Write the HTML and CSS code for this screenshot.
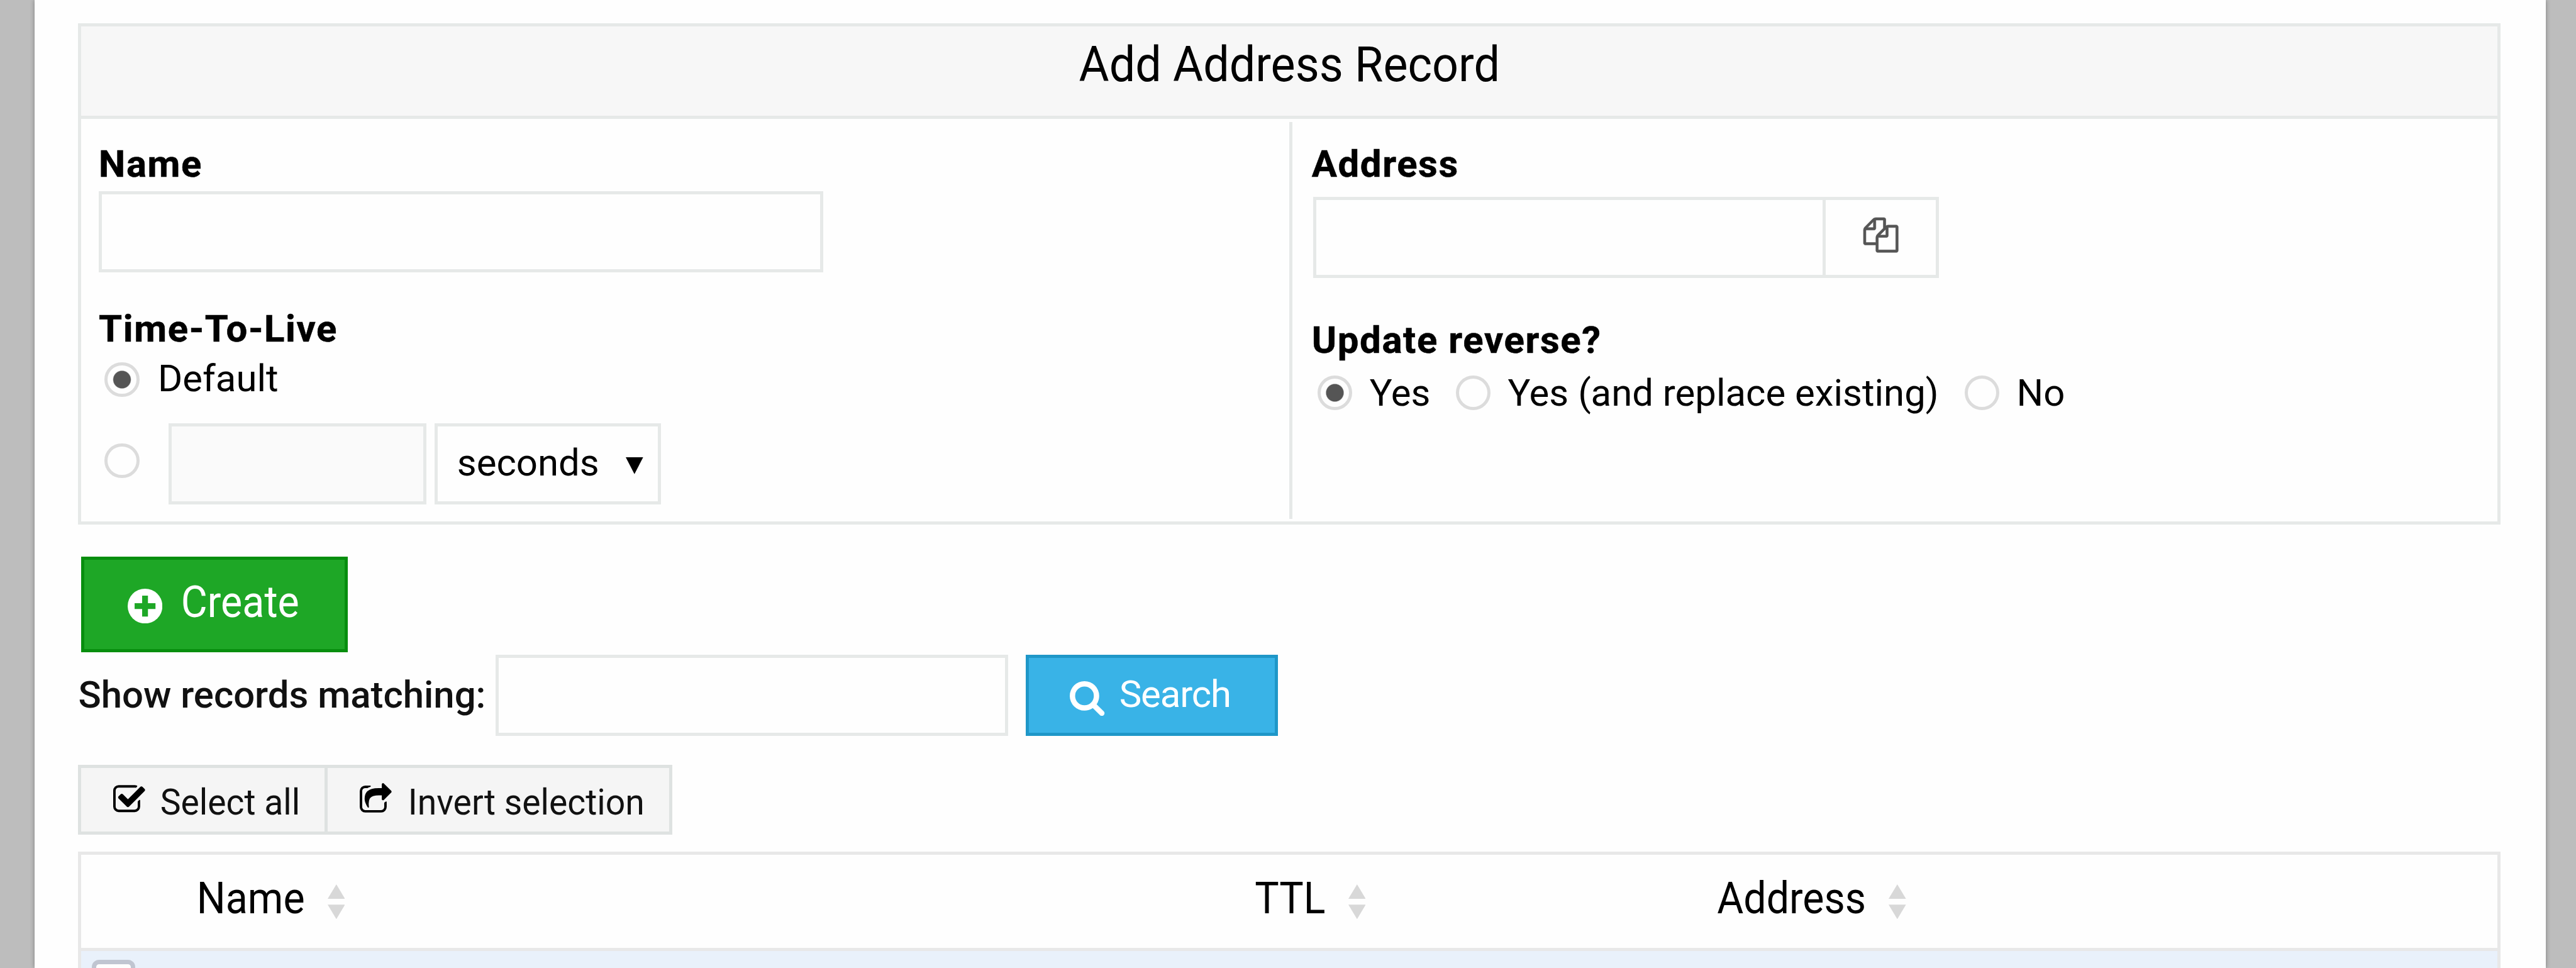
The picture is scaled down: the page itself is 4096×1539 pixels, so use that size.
FILE: index.html
```html
<!DOCTYPE html>
<html lang="en">
<head>
<meta charset="utf-8">
<title>Address Records</title>
<link rel="stylesheet" href="styles.css">
</head>
<body>
<main class="page">
  <section class="panel">
    <h1 class="panel-title"><span class="tall-title">Add Address Record</span></h1>
    <div class="panel-body">
      <div class="col col-left">
        <div class="label">Name</div>
        <div class="box name-input"></div>
        <div class="label ttl-label">Time-To-Live</div>
        <div class="line"><span class="radio on"></span><span class="radio-text r-default">Default</span></div>
        <div class="ttl-row">
          <span class="radio"></span>
          <div class="box ttl-input"></div>
          <div class="box select"><span>seconds</span><svg class="caret" viewBox="0 0 6 6"><path d="M0 0h6L3 5.8z"/></svg></div>
        </div>
      </div>
      <div class="col col-right">
        <div class="label">Address</div>
        <div class="addr-group">
          <div class="box addr-input"></div>
          <div class="box addr-button"><svg class="icon-files" viewBox="0 0 1792 1792"><path d="M1696 384q40 0 68 28t28 68v1216q0 40-28 68t-68 28h-960q-40 0-68-28t-28-68v-288h-544q-40 0-68-28t-28-68v-672q0-40 20-88t48-76l408-408q28-28 76-48t88-20h416q40 0 68 28t28 68v328q68-40 128-40h416zm-544 213l-299 299h299v-299zm-640-384l-299 299h299v-299zm196 647l316-316v-416h-384v416q0 40-28 68t-68 28h-416v640h512v-256q0-40 20-88t48-76zm956 804v-1152h-384v416q0 40-28 68t-68 28h-416v640h896z"/></svg></div>
        </div>
        <div class="label reverse-label">Update reverse?</div>
        <div class="line reverse-line">
          <span class="radio on"></span><span class="radio-text r-yes">Yes</span>
          <span class="radio"></span><span class="radio-text r-replace">Yes (and replace existing)</span>
          <span class="radio"></span><span class="radio-text">No</span>
        </div>
      </div>
    </div>
  </section>

  <div class="create"><svg class="icon-plus" viewBox="0 0 12 12"><circle cx="6" cy="6" r="6"/><path class="plus" d="M6 2.4v7.2M2.4 6h7.2"/></svg><span class="create-text">Create</span></div>

  <div class="search-row">
    <span class="search-label">Show records matching:</span>
    <div class="box search-input"></div>
    <div class="search"><svg class="icon-search" viewBox="0 0 1664 1664"><path d="M1152 704q0-185-131.500-316.500t-316.500-131.500-316.500 131.500-131.500 316.500 131.500 316.500 316.500 131.500 316.500-131.500 131.500-316.500zm512 832q0 52-38 90t-90 38q-54 0-90-38l-343-342q-179 124-399 124-143 0-273.500-55.500t-225-150-150-225-55.500-273.500 55.500-273.500 150-225 225-150 273.500-55.500 273.500 55.500 225 150 150 225 55.500 273.500q0 220-124 399l343 343q37 37 37 90z"/></svg><span class="search-text">Search</span></div>
  </div>

  <div class="links">
    <div class="link link-all"><svg class="icon-check" viewBox="0 0 1664 1280"><path d="M1408 606v318q0 119-84.500 203.500t-203.500 84.500h-832q-119 0-203.500-84.500t-84.500-203.500v-832q0-119 84.500-203.500t203.500-84.500h832q63 0 117 25 15 7 18 23 3 17-9 29l-49 49q-10 10-23 10-3 0-9-2-23-6-45-6h-832q-66 0-113 47t-47 113v832q0 66 47 113t113 47h832q66 0 113-47t47-113v-254q0-13 9-22l64-64q10-10 23-10 6 0 12 3 20 8 20 29zm231-489l-814 814q-24 24-57 24t-57-24l-430-430q-24-24-24-57t24-57l110-110q24-24 57-24t57 24l263 263 647-647q24-24 57-24t57 24l110 110q24 24 24 57t-24 57z" transform="translate(0 140)"/></svg><span>Select all</span></div>
    <div class="link link-invert"><svg class="icon-share" viewBox="0 0 1664 1408"><path d="M1408 989v259q0 119-84.500 203.500t-203.500 84.500h-832q-119 0-203.500-84.500t-84.500-203.500v-832q0-119 84.500-203.500t203.500-84.500h255q13 0 22.500 9.500t9.500 22.500q0 27-26 32-77 26-133 60-10 4-16 4h-112q-66 0-113 47t-47 113v832q0 66 47 113t113 47h832q66 0 113-47t47-113v-214q0-19 18-29 28-13 54-37 16-16 35-8 21 9 21 29zm237-496l-384 384q-18 19-45 19-12 0-25-5-39-17-39-59v-192h-160q-323 0-438 131-119 137-74 473 3 23-20 34-8 2-12 2-16 0-26-13-10-14-21-31t-39.500-68.500-49.500-99.500-38.500-114-17.500-122q0-49 3.500-91t14-90 28-88 47-81.500 68.500-74 94.500-61.500 124.500-48.500 159.500-30.500 196.500-11h160v-192q0-42 39-59 13-5 25-5 26 0 45 19l384 384q19 19 19 45t-19 45z" transform="translate(0 -128)"/></svg><span>Invert selection</span></div>
  </div>

  <section class="table">
    <div class="thead">
      <div class="th th-name"><span class="tall">Name</span><svg class="sort" viewBox="0 0 6 12"><path d="M3 0l3 5H0zM0 7h6l-3 5z"/></svg></div>
      <div class="th th-ttl"><span class="tall">TTL</span><svg class="sort" viewBox="0 0 6 12"><path d="M3 0l3 5H0zM0 7h6l-3 5z"/></svg></div>
      <div class="th th-addr"><span class="tall">Address</span><svg class="sort" viewBox="0 0 6 12"><path d="M3 0l3 5H0zM0 7h6l-3 5z"/></svg></div>
    </div>
    <div class="trow"><span class="checkbox"></span></div>
  </section>
</main>
</body>
</html>
```
FILE: styles.css
```css
* { box-sizing: border-box; }

/* 1rem is one layout unit; every measure below is in these units */
html { font-size: 4.6074px; }

body {
  margin: 0;
  height: 100vh;
  overflow: hidden;
  background: #bdbdbd;
  font-family: Roboto, "Liberation Sans", sans-serif;
  color: #000;
}

.page {
  height: 100vh;
  margin: 0 10.5rem 0 12rem;
  padding: 8rem 15.5rem 0 15rem;
  background: #fefefe;
  box-shadow: 0 0 1.5rem rgba(0, 0, 0, .35);
  font-size: 13rem;
  line-height: 16rem;
  overflow: hidden;
  white-space: nowrap;
}

svg { display: block; flex: none; fill: currentColor; }

/* headings are drawn slightly taller than their natural width */
.tall-title, .tall, .create-text { display: inline-block; transform-origin: 50% 80%; }
.tall-title { transform: scaleY(1.06); }
.tall, .create-text { transform: scaleY(1.09); }

.panel {
  height: 173rem;
  width: 836rem;
  border: 1.09rem solid #e6e9e8;
}

.panel-title {
  margin: 0;
  height: 32rem;
  padding-top: 3.5rem;
  border-bottom: 1.09rem solid #e6e9e8;
  background: #f7f7f7;
  text-align: center;
  font-size: 16rem;
  line-height: 20rem;
  font-weight: 400;
}

.panel-body { display: flex; height: 139rem; padding: 1rem 0; }
.col { padding-top: 6.6rem; }
.col-left { width: 418rem; padding-left: 6rem; border-right: 1.09rem solid #e6e9e8; }
.col-right { padding-left: 6.6rem; }

.label {
  height: 16rem;
  font-weight: 700;
  letter-spacing: .35rem;
  -webkit-text-stroke: .12rem #000;
}

.box { height: 28rem; border: 1.09rem solid #e6e9e8; background: #fefefe; }
.name-input { width: 250rem; margin-top: 1.3rem; }
.ttl-label { margin-top: 11.5rem; }

.line { display: flex; align-items: center; height: 16rem; margin-top: 1.5rem; padding-left: 2rem; }
.radio {
  flex: none;
  width: 12rem;
  height: 12rem;
  border: 1.09rem solid #dcdcdc;
  border-radius: 50%;
  background: #fefefe;
}
.radio.on { background: radial-gradient(circle, #555 2.9rem, #fefefe 3.2rem); }
.radio-text { margin-left: 6rem; }
.r-default { margin: -.6rem 0 0 6.4rem; }

.ttl-row { display: flex; height: 28rem; margin-top: 7.1rem; padding-left: 2rem; }
.ttl-row .radio { margin: 7rem 10rem 0 0; }
.ttl-input { width: 89rem; margin-right: 3rem; background: #fafafa; }
.select { display: flex; width: 78rem; padding: 4.5rem 0 0 6.6rem; }
.caret { width: 6rem; height: 6rem; margin: 6.2rem 0 0 9.2rem; }

.addr-group { display: flex; margin: 3.3rem 0 0 .4rem; }
.addr-input { width: 177rem; margin-right: -1rem; }
.addr-button { width: 40rem; padding: 6rem 0 0 13rem; color: #555; }
.icon-files { width: 12rem; height: 12rem; stroke: #555; stroke-width: 20; overflow: visible; }
.reverse-label { margin-top: 13.4rem; }
.reverse-line { margin-top: 2.2rem; }
.r-yes { width: 29.7rem; }
.r-replace { width: 157.6rem; }

.create {
  display: flex;
  width: 92rem;
  height: 33rem;
  margin: 11rem 0 0 1rem;
  padding-left: 15rem;
  border: 1.09rem solid #078e0e;
  background: #1ea726;
  color: #fff;
  font-size: 14rem;
}
.create-text { height: 16rem; margin-top: 7.3rem; }
.icon-plus { width: 12rem; height: 12rem; margin: 10rem 6.4rem 0 0; }
.plus { fill: none; stroke: #1ea726; stroke-width: 2; }

.search-row { display: flex; height: 28rem; margin-top: 1rem; }
.search-label { width: 144rem; padding-top: 5.8rem; font-weight: 500; color: #111; }
.search-input { width: 177rem; margin-right: 6rem; }
.search {
  display: flex;
  width: 87rem;
  border: 1.09rem solid #1f97c8;
  background: #39b3e7;
  color: #fff;
  padding: 4.6rem 0 0 14.2rem;
}
.search-text { letter-spacing: -.25rem; }
.icon-search { width: 12rem; height: 12rem; margin: 3.4rem 5rem 0 0; }

.links { display: flex; width: 205rem; height: 24rem; margin-top: 10rem; font-size: 12rem; color: #111; }
.link { display: flex; border: 1.09rem solid #dee2e1; background: #f5f5f5; }
.link span { height: 16rem; margin-top: 4rem; transform: scaleY(1.05); transform-origin: 50% 80%; }
.link-all { width: 86rem; margin-right: -1rem; padding-left: 11rem; }
.link-invert { width: 120rem; padding-left: 11rem; }
.icon-check, .icon-share { width: 11rem; height: 9.3rem; margin: 6rem 5.7rem 0 0; color: #000; overflow: visible; }
.icon-check { height: 8.46rem; margin: 6.3rem 5.2rem 0 0; }

.table { width: 836rem; height: 60rem; margin-top: 6rem; border: 1.09rem solid #e8e8e8; border-bottom: 0; }
.thead { display: flex; height: 33rem; padding-top: 7rem; border-bottom: 1.09rem solid #e8e8e8; font-size: 14rem; }
.th { display: flex; }
.tall { height: 16rem; margin-top: .4rem; }
.sort { width: 6rem; height: 12rem; margin: 3rem 0 0 7.800rem; fill: #d8d8d8; }
.th-name { margin-left: 39.800rem; width: 365.200rem; }
.th-ttl { width: 159.500rem; }
.trow { height: 26rem; padding: 3.2rem 0 0 3.5rem; background: #e9f1fb; }
.checkbox { display: block; width: 15rem; height: 15rem; border: 1.7rem solid #c0c5d1; border-radius: 2.500rem; background: #fefefe; }
```
